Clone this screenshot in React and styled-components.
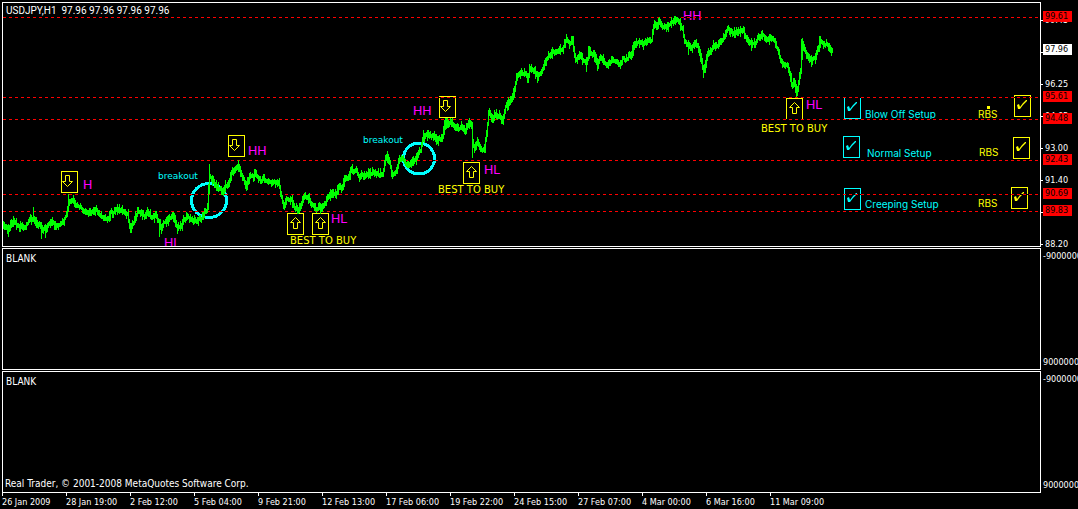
import React from "react";
import styled, { createGlobalStyle } from "styled-components";

const GlobalStyle = createGlobalStyle`
  *, *::before, *::after { box-sizing: border-box; }
  body {
    margin: 0;
    background: #000;
    color: #fff;
    font: 9px/16px "DejaVu Sans Condensed", "DejaVu Sans", sans-serif;
    overflow: hidden;
  }
`;

const Terminal = styled.main`
  display: grid;
  grid-template-columns: minmax(0, 1fr) 37px;
  grid-template-rows: 245px 122px 122px auto;
  row-gap: 1px;
  padding: 2px 0 0 2px;
`;

const Panel = styled.section`
  position: relative;
  display: flex;
  flex-direction: column;
  justify-content: space-between;
  border: 1px solid #fff;
  overflow: hidden;
`;

const PanelTitle = styled.h2`
  margin: 0;
  padding-left: 3px;
  font: ${(p) => (p.$quotes ? '10px/16px Roboto, sans-serif' : '10px/20px "DejaVu Sans Condensed", sans-serif')};
  white-space: pre;
`;

const Copyright = styled.p`
  margin: 0;
  padding-left: 2px;
  font-size: 10px;
`;

const Plot = styled.svg`
  position: absolute;
  inset: 0;
  width: 100%;
  height: 100%;
`;

const Note = styled.span`
  position: absolute;
  left: ${(p) => p.$x}px;
  top: ${(p) => p.$y}px;
  color: ${(p) => p.$color};
  font: 10px/12px Inter, "Liberation Sans", sans-serif;
  white-space: nowrap;
`;

const SwingMark = styled(Note)`
  color: #f0f;
  font: 13px/14px Roboto, "Liberation Sans", sans-serif;
`;

const BreakoutNote = styled(Note)`
  color: #0ff;
  font: 9px/12px "DejaVu Sans", sans-serif;
`;

const BuyNote = styled(Note)`
  color: #ff0;
  font: 10px/12px "DejaVu Sans", sans-serif;
`;

const ArrowBox = styled.svg`
  position: absolute;
  left: ${(p) => p.$x}px;
  top: ${(p) => p.$y}px;
  width: 17px;
  height: 22px;
  border: 1px solid #ff0;
  fill: none;
  stroke: #ff0;
`;

const Tick = styled.span`
  position: absolute;
  left: ${(p) => p.$x}px;
  top: ${(p) => p.$y}px;
  width: 17px;
  height: 22px;
  color: ${(p) => p.$color};
`;

const TickInput = styled.input`
  appearance: none;
  display: block;
  width: 100%;
  height: 100%;
  margin: 0;
  border: 1px solid currentColor;
  color: inherit;
`;

const TickMark = styled.svg`
  position: absolute;
  inset: 0;
  width: 17px;
  height: 22px;
  fill: currentColor;
  pointer-events: none;
`;

const PriceAxis = styled.div`
  position: relative;
  display: flex;
  flex-direction: column;
  gap: 16px;
  padding-top: 10px;
`;

const PriceLabel = styled.span`
  display: flex;
  align-items: center;
  gap: 2px;
  height: 16px;
  &::before {
    content: "";
    width: 2px;
    height: 1px;
    background: #fff;
  }
`;

const PriceTag = styled.span`
  position: absolute;
  left: 2px;
  top: ${(p) => p.$y}px;
  width: 29px;
  padding-left: 2px;
  background: ${(p) => p.$bg};
  color: #000;
  line-height: 11px;
`;

const RangeAxis = styled.div`
  display: flex;
  flex-direction: column;
  justify-content: space-between;
  padding-left: 2px;
  overflow: hidden;
`;

const TimeAxis = styled.div`
  display: flex;
  grid-column: 1 / -1;
  margin-top: -1px;
`;

const TimeLabel = styled.span`
  flex: 0 0 64px;
  line-height: 12px;
  white-space: nowrap;
  &::before {
    content: "";
    display: block;
    width: 1px;
    height: 3px;
    background: #fff;
  }
`;

const levels = [17, 97, 119, 160, 194, 211];

// Centre of the price band, as x,y pairs in chart pixels.
const trend = [
  3,225, 8,230, 12,222, 20,226, 24,227, 28,222, 33,217, 36,224, 40,227, 45,228, 50,222, 55,226, 62,222, 66,214, 68,202,
  73,201, 76,205, 80,207, 84,211, 88,213, 92,213, 96,209, 99,215, 104,218, 108,219, 110,213, 115,210, 122,211, 127,215,
  130,229, 133,223, 137,211, 140,213, 144,218, 147,213, 152,217, 156,218, 160,228, 163,222, 168,218, 173,217, 177,228,
  181,226, 184,217, 190,219, 197,222, 201,217, 205,213, 207,207, 208,190, 209,177, 211,180, 214,184, 217,188, 222,191,
  225,187, 228,185, 231,173, 234,169, 238,167, 240,173, 243,178, 246,187, 249,177, 255,175, 260,180, 265,180, 268,181,
  272,182, 278,183, 280,193, 283,205, 286,200, 291,201, 294,208, 297,210, 299,207, 302,202, 304,195, 307,198, 310,203,
  314,207, 318,208, 322,208, 325,204, 328,197, 332,192, 335,195, 338,187, 341,189, 344,178, 347,177, 351,170, 356,171,
  359,177, 364,174, 370,173, 376,174, 382,174, 384,163, 386,157, 389,162, 392,175, 396,170, 399,160, 402,158, 405,163,
  408,165, 412,161, 417,156, 420,150, 421,143, 423,133, 428,135, 433,135, 437,141, 442,137, 444,125, 448,123, 451,123,
  455,127, 462,128, 465,132, 468,123, 471,127, 472,142, 474,149, 477,140, 480,151, 484,150, 486,133, 488,112, 492,118,
  496,115, 502,120, 505,108, 510,100, 514,90, 516,76, 520,74, 524,74, 527,78, 529,68, 533,70, 537,76, 540,73, 542,67,
  546,58, 551,53, 556,52, 562,51, 564,44, 566,39, 569,43, 572,39, 573,50, 575,59, 580,55, 583,60, 586,64, 589,52,
  593,55, 597,64, 599,57, 602,60, 607,65, 611,60, 615,62, 620,65, 622,60, 627,58, 631,54, 634,45, 637,41, 642,45,
  646,42, 651,39, 653,25, 658,24, 665,27, 670,24, 675,20, 678,22, 682,30, 684,43, 687,43, 690,49, 693,45, 698,47,
  701,63, 703,71, 705,67, 706,54, 710,52, 713,46, 718,45, 722,41, 724,35, 727,30, 732,33, 738,31, 743,32, 746,38,
  750,43, 755,43, 758,35, 763,36, 767,40, 773,40, 777,48, 780,60, 783,64, 787,65, 789,72, 791,86, 794,83, 796,91,
  798,82, 800,70, 802,44, 805,52, 808,58, 812,60, 815,56, 818,48, 820,42, 823,45, 826,45, 829,50, 832,50,
];

// Single bars whose high or low leaves the band: x, high, low.
const spikes = [
  [8, 224, 237], [33, 207, 218], [41, 224, 239], [45, 224, 238], [68, 194, 205], [73, 195, 204], [159, 222, 237],
  [209, 164, 190], [225, 180, 192], [238, 160, 170], [246, 181, 191], [279, 178, 189], [297, 205, 214], [320, 203, 213],
  [356, 166, 172], [386, 154, 160], [392, 170, 177], [424, 133, 143], [445, 121, 130], [472, 135, 158], [488, 110, 120],
  [527, 74, 83], [537, 72, 83], [566, 35, 42], [586, 60, 72], [588, 46, 60], [597, 62, 71], [620, 60, 69], [675, 16, 24],
  [688, 40, 55], [703, 68, 78], [727, 26, 33], [751, 38, 51], [796, 86, 97], [801, 39, 70], [811, 56, 67], [819, 36, 50],
];

function noise(n) {
  const v = Math.sin(n * 12.9898) * 43758.5453;
  return v - Math.floor(v);
}

function pricePath() {
  let d = "";
  let seg = 0;
  let previous = trend[1];
  for (let x = 3; x <= 832; x += 1) {
    while (seg + 4 < trend.length && trend[seg + 2] < x) seg += 2;
    const [x0, y0, x1, y1] = trend.slice(seg, seg + 4);
    const drift = (noise(Math.floor(x / 2) + 900) - 0.5) * 3;
    const mid = y0 + ((y1 - y0) * (x - x0)) / (x1 - x0) + drift;
    const up = 1.7 + 4 * noise(x) ** 2;
    const down = 1.7 + 4 * noise(x + 2000) ** 2;
    const top = Math.round(Math.min(mid, previous) - up);
    const bottom = Math.round(Math.max(mid, previous) + down);
    d += `M${x} ${top}V${bottom}`;
    previous = mid;
  }
  spikes.forEach(([x, high, low]) => {
    d += `M${x} ${high}V${low}`;
  });
  return d;
}

const swings = [
  ["H", 80, 175], ["HL", 161, 233], ["HH", 245, 141], ["HL", 328, 209],
  ["HH", 410, 101], ["HL", 481, 160], ["HH", 680, 6], ["HL", 803, 95],
];

const breakouts = [[155, 167], [360, 131]];

const buys = [[287, 232], [435, 181], [758, 120]];

const arrows = [
  ["down", 58, 168], ["down", 225, 132], ["down", 436, 93],
  ["up", 284, 210], ["up", 309, 210], ["up", 460, 159], ["up", 783, 95],
];

const arrowPaths = {
  down: "M3.5 3.5H7.5V9.5H10.5L5.5 14.5L.5 9.5H3.5Z",
  up: "M7.5 3.5L12.5 8.5H9.5V14.5H5.5V8.5H2.5Z",
};

const setups = [
  { id: "blow", text: "Blow Off Setup", color: "#0ff", box: [841, 94], label: [862, 105] },
  { id: "normal", text: "Normal Setup", color: "#0ff", box: [840, 133], label: [864, 144] },
  { id: "creep", text: "Creeping Setup", color: "#0ff", box: [841, 185], label: [862, 195] },
  { id: "rbs1", text: "RBS", color: "#ff0", box: [1011, 92], label: [975, 105] },
  { id: "rbs2", text: "RBS", color: "#ff0", box: [1010, 134], label: [976, 143] },
  { id: "rbs3", text: "RBS", color: "#ff0", box: [1008, 184], label: [975, 194] },
];

const prices = ["99.45", "97.85", "96.25", "94.65", "93.00", "91.40", "89.80", "88.20"];

const tags = [
  ["99.61", 9], ["97.96", 42, "#fff"], ["95.61", 89], ["94.48", 111], ["92.43", 152], ["90.69", 186], ["89.83", 203],
];

const times = [
  "26 Jan 2009", "28 Jan 19:00", "2 Feb 12:00", "5 Feb 04:00", "9 Feb 21:00", "12 Feb 13:00", "17 Feb 06:00",
  "19 Feb 22:00", "24 Feb 15:00", "27 Feb 07:00", "4 Mar 00:00", "6 Mar 16:00", "11 Mar 09:00",
];

function Setup({ id, text, color, box, label }) {
  return (
    <>
      <Tick $x={box[0]} $y={box[1]} $color={color}>
        <TickInput type="checkbox" id={id} defaultChecked />
        <TickMark viewBox="0 0 17 22" aria-hidden="true">
          <path d="M3 10L5 9L6 12L9 8L12 5H13V6L9 10L6 14H4Z" />
        </TickMark>
      </Tick>
      <Note as="label" htmlFor={id} $x={label[0]} $y={label[1]} $color={color}>{text}</Note>
    </>
  );
}

function RangePanel({ footer }) {
  return (
    <>
      <Panel>
        <PanelTitle>BLANK</PanelTitle>
        {footer}
      </Panel>
      <RangeAxis>
        <span>-9000000</span>
        <span>9000000</span>
      </RangeAxis>
    </>
  );
}

export default function App() {
  return (
    <>
      <GlobalStyle />
      <Terminal>
        <Panel>
          <PanelTitle $quotes>{"USDJPY,H1  97.96 97.96 97.96 97.96"}</PanelTitle>
          {swings.map(([text, x, y]) => <SwingMark key={x} $x={x} $y={y}>{text}</SwingMark>)}
          {breakouts.map(([x, y]) => <BreakoutNote key={x} $x={x} $y={y}>breakout</BreakoutNote>)}
          {buys.map(([x, y]) => <BuyNote key={x} $x={x} $y={y}>BEST TO BUY</BuyNote>)}
          {arrows.map(([kind, x, y]) => (
            <ArrowBox key={x} $x={x} $y={y} viewBox="0 0 15 20" aria-hidden="true">
              <path d={arrowPaths[kind]} />
            </ArrowBox>
          ))}
          {setups.map((s) => <Setup key={s.id} {...s} />)}
          <Plot aria-hidden="true" pointerEvents="none">
            <g transform="translate(-3 -3)" shapeRendering="crispEdges">
              <rect x="987" y="106" width="3" height="3" fill="#ff0" />
              <g fill="none" stroke="#0ff" strokeWidth="3">
                <ellipse cx="209" cy="200.5" rx="17.5" ry="17" />
                <circle cx="419" cy="158.5" r="15.5" />
              </g>
              {levels.map((y) => (
                <g key={y} transform={`translate(3 ${y}.5)`}>
                  <line x2="100%" stroke="#000" />
                  <line x2="100%" stroke="#f00" strokeDasharray="3 3" />
                </g>
              ))}
              <path d={pricePath()} transform="translate(.5 0)" stroke="#0f0" />
            </g>
          </Plot>
        </Panel>
        <PriceAxis>
          {prices.map((p) => <PriceLabel key={p}>{p}</PriceLabel>)}
          {tags.map(([text, y, bg = "#f00"]) => <PriceTag key={text} $y={y} $bg={bg}>{text}</PriceTag>)}
        </PriceAxis>
        <RangePanel />
        <RangePanel footer={<Copyright>Real Trader, © 2001-2008 MetaQuotes Software Corp.</Copyright>} />
        <TimeAxis>
          {times.map((t) => <TimeLabel key={t}>{t}</TimeLabel>)}
        </TimeAxis>
      </Terminal>
    </>
  );
}
